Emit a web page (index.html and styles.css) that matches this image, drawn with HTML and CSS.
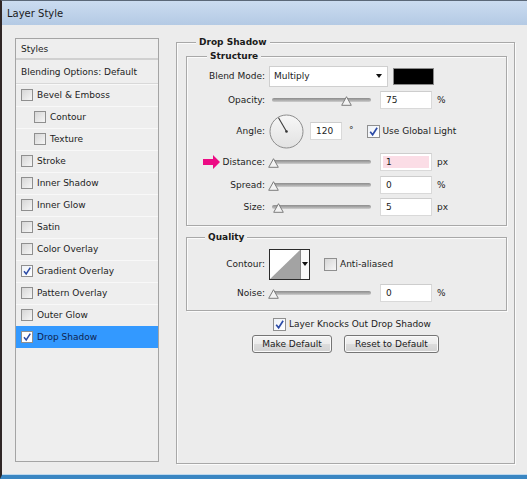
FILE: index.html
```html
<!DOCTYPE html>
<html>
<head>
<meta charset="utf-8">
<title>Layer Style</title>
<link rel="stylesheet" href="styles.css">
</head>
<body>
<div class="window">
  <div class="titlebar">Layer Style</div>
  <div class="content">
    <div class="sidebar">
      <div class="side-head">Styles</div>
      <div class="side-blend">Blending Options: Default</div>
      <div class="side-item"><span class="cb"></span><span>Bevel &amp; Emboss</span></div>
      <div class="side-item sub"><span class="cb"></span><span>Contour</span></div>
      <div class="side-item sub"><span class="cb"></span><span>Texture</span></div>
      <div class="side-item"><span class="cb"></span><span>Stroke</span></div>
      <div class="side-item"><span class="cb"></span><span>Inner Shadow</span></div>
      <div class="side-item"><span class="cb"></span><span>Inner Glow</span></div>
      <div class="side-item"><span class="cb"></span><span>Satin</span></div>
      <div class="side-item"><span class="cb"></span><span>Color Overlay</span></div>
      <div class="side-item"><span class="cb checked"><svg viewBox="0 0 10 10" width="10" height="10"><path d="M2 5.2 L4.2 8 L8.3 1.6" fill="none" stroke="#2b4aa6" stroke-width="1.5"/></svg></span><span>Gradient Overlay</span></div>
      <div class="side-item"><span class="cb"></span><span>Pattern Overlay</span></div>
      <div class="side-item"><span class="cb"></span><span>Outer Glow</span></div>
      <div class="side-item selected"><span class="cb checked"><svg viewBox="0 0 10 10" width="10" height="10"><path d="M2 5.2 L4.2 8 L8.3 1.6" fill="none" stroke="#2b4aa6" stroke-width="1.5"/></svg></span><span>Drop Shadow</span></div>
    </div>

    <div class="panel">
      <div class="group outer">
        <div class="group-title t-drop">Drop Shadow</div>

        <div class="group structure">
          <div class="group-title t-structure">Structure</div>
          <div class="rows">
            <div class="row h24">
              <div class="lbl">Blend Mode:</div>
              <div class="select"><span>Multiply</span><span class="caret"></span></div>
              <div class="swatch"></div>
            </div>
            <div class="row h24">
              <div class="lbl">Opacity:</div>
              <div class="slider"><div class="track"></div><svg class="thumb" style="left:69px" viewBox="0 0 11 10" width="11" height="10"><polygon points="5.5,0.7 10.3,9.3 0.7,9.3" fill="#f3f3f3" stroke="#7c7c7c" stroke-width="1"/></svg></div>
              <div class="input">75</div>
              <span class="unit">%</span>
            </div>
            <div class="row h38">
              <div class="lbl">Angle:</div>
              <svg class="dial" viewBox="0 0 35 35" width="35" height="35">
                <defs><linearGradient id="dg" x1="0" y1="0" x2="0" y2="1"><stop offset="0" stop-color="#f7f7f7"/><stop offset="1" stop-color="#e2e2e2"/></linearGradient></defs>
                <circle cx="17.5" cy="17.5" r="16.5" fill="url(#dg)" stroke="#8c8c8c" stroke-width="1"/>
                <line x1="17.5" y1="17.5" x2="9.5" y2="3.8" stroke="#3a3a3a" stroke-width="1.1"/>
                <circle cx="17.5" cy="17.5" r="1.3" fill="#333"/>
              </svg>
              <div class="input w32">120</div>
              <span class="deg">°</span>
              <span class="cb checked big"><svg viewBox="0 0 10 10" width="11" height="11"><path d="M2 5.2 L4.2 8 L8.3 1.6" fill="none" stroke="#2b4aa6" stroke-width="1.5"/></svg></span>
              <span class="cb-text">Use Global Light</span>
            </div>
            <div class="row h24">
              <div class="lbl"><svg class="arrow" viewBox="0 0 17 14" width="17" height="14"><polygon points="0,4 10,4 10,0 17,7 10,14 10,10 0,10" fill="#ec0b84"/></svg><span>Distance:</span></div>
              <div class="slider"><div class="track"></div><svg class="thumb" style="left:-4px" viewBox="0 0 11 10" width="11" height="10"><polygon points="5.5,0.7 10.3,9.3 0.7,9.3" fill="#f3f3f3" stroke="#7c7c7c" stroke-width="1"/></svg></div>
              <div class="input pink">1</div>
              <span class="unit">px</span>
            </div>
            <div class="row h22">
              <div class="lbl">Spread:</div>
              <div class="slider"><div class="track"></div><svg class="thumb" style="left:-4px" viewBox="0 0 11 10" width="11" height="10"><polygon points="5.5,0.7 10.3,9.3 0.7,9.3" fill="#f3f3f3" stroke="#7c7c7c" stroke-width="1"/></svg></div>
              <div class="input">0</div>
              <span class="unit">%</span>
            </div>
            <div class="row h22">
              <div class="lbl">Size:</div>
              <div class="slider"><div class="track"></div><svg class="thumb" style="left:1px" viewBox="0 0 11 10" width="11" height="10"><polygon points="5.5,0.7 10.3,9.3 0.7,9.3" fill="#f3f3f3" stroke="#7c7c7c" stroke-width="1"/></svg></div>
              <div class="input">5</div>
              <span class="unit">px</span>
            </div>
          </div>
        </div>

        <div class="group quality">
          <div class="group-title t-quality">Quality</div>
          <div class="rows">
            <div class="row h38">
              <div class="lbl">Contour:</div>
              <div class="contour">
                <svg viewBox="0 0 30 29" width="30" height="29"><rect width="30" height="29" fill="#ffffff"/><polygon points="0,29 30,0 30,29" fill="#a3a3a3"/></svg>
                <div class="contour-caret"><span class="caret"></span></div>
              </div>
              <span class="cb big aa"></span>
              <span class="cb-text">Anti-aliased</span>
            </div>
            <div class="row h20">
              <div class="lbl">Noise:</div>
              <div class="slider"><div class="track"></div><svg class="thumb" style="left:-4px" viewBox="0 0 11 10" width="11" height="10"><polygon points="5.5,0.7 10.3,9.3 0.7,9.3" fill="#f3f3f3" stroke="#7c7c7c" stroke-width="1"/></svg></div>
              <div class="input">0</div>
              <span class="unit">%</span>
            </div>
          </div>
        </div>

        <div class="knock">
          <span class="cb checked big"><svg viewBox="0 0 10 10" width="11" height="11"><path d="M2 5.2 L4.2 8 L8.3 1.6" fill="none" stroke="#2b4aa6" stroke-width="1.5"/></svg></span>
          <span class="cb-text">Layer Knocks Out Drop Shadow</span>
        </div>
        <div class="buttons">
          <div class="btn b-make">Make Default</div>
          <div class="btn b-reset">Reset to Default</div>
        </div>
      </div>
    </div>
  </div>
</div>
</body>
</html>
```

FILE: styles.css
```css
html, body {
  margin: 0;
  padding: 0;
}
body {
  width: 527px;
  height: 479px;
  overflow: hidden;
  background: #ececec;
  font-family: "DejaVu Sans", "Liberation Sans", sans-serif;
  font-size: 9px;
  color: #1c1c1c;
}
.window {
  box-sizing: border-box;
  height: 479px;
  display: flex;
  flex-direction: column;
  border-top: 1px solid #5b6878;
  border-left: 2px solid #2f2626;
  border-bottom: 4px solid #3a86c2;
  box-shadow: inset 0 -1px 0 #bcd8ee;
}
.titlebar {
  height: 24px;
  flex: none;
  display: flex;
  align-items: center;
  padding-left: 5px;
  font-size: 10px;
  color: #1a1a1a;
  background: linear-gradient(#cbdcf0, #bdd1e9 60%, #b4cae4);
}
.content {
  flex: 1;
  display: flex;
  align-items: flex-start;
  padding: 13px 0 0 13px;
}

/* sidebar */
.sidebar {
  box-sizing: border-box;
  width: 144px;
  height: 424px;
  flex: none;
  border: 1px solid #a4a4a4;
  background: #eeeeee;
  display: flex;
  flex-direction: column;
}
.side-head {
  box-sizing: border-box;
  height: 21px;
  display: flex;
  align-items: center;
  padding-left: 5px;
  border-bottom: 2px solid #d0d0d0;
}
.side-blend {
  box-sizing: border-box;
  height: 24px;
  display: flex;
  align-items: center;
  padding-left: 5px;
  border-bottom: 1px solid #d8d8d8;
}
.side-item {
  height: 22px;
  display: flex;
  align-items: center;
  padding-left: 5px;
  gap: 4px;
  box-shadow: inset 0 1px 0 #f8f8f8;
}
.side-item.sub {
  padding-left: 18px;
}
.side-item.selected {
  background: #3399ff;
  color: #0f234f;
  box-shadow: none;
}
.side-item.selected .cb {
  background: #ffffff;
}

/* checkbox */
.cb {
  box-sizing: border-box;
  width: 12px;
  height: 12px;
  flex: none;
  border: 1px solid #8f8f8f;
  background: linear-gradient(135deg, #d6d6d6, #f6f6f6);
  display: flex;
  align-items: center;
  justify-content: center;
}
.cb.checked {
  background: linear-gradient(135deg, #eef2f8, #ffffff);
}
.cb.big {
  width: 13px;
  height: 13px;
}

/* panel */
.panel {
  margin-left: 17px;
  margin-top: 4px;
  width: 339px;
  flex: none;
}
.group {
  box-sizing: border-box;
  border: 1px solid #a8a8a8;
  box-shadow: 1px 1px 0 #fbfbfb, inset 1px 1px 0 #fbfbfb;
  display: flex;
  flex-direction: column;
}
.group-title {
  align-self: flex-start;
  margin-top: -7px;
  height: 12px;
  line-height: 12px;
  padding: 0 3px;
  background: #ececec;
  font-weight: bold;
  color: #1a1a1a;
}
.outer {
  height: 422px;
}
.t-drop {
  margin-left: 19px;
}
.structure {
  margin: 8px 7px 0 9px;
  padding-bottom: 7px;
}
.t-structure {
  margin-left: 20px;
}
.quality {
  margin: 11px 7px 0 9px;
  padding-bottom: 7px;
}
.t-quality {
  margin-left: 18px;
}
.rows {
  margin-top: 2px;
  display: flex;
  flex-direction: column;
}
.row {
  display: flex;
  align-items: center;
}
.h24 { height: 24px; }
.h22 { height: 22px; }
.h20 { height: 20px; }
.h38 { height: 38px; }
.lbl {
  width: 78px;
  flex: none;
  margin-right: 4px;
  display: flex;
  justify-content: flex-end;
  align-items: center;
  gap: 3px;
  text-align: right;
}
.arrow {
  display: block;
}

/* blend select */
.select {
  box-sizing: border-box;
  width: 119px;
  height: 21px;
  background: #ffffff;
  border: 1px solid #cfcfcf;
  display: flex;
  align-items: center;
  justify-content: space-between;
  padding: 0 5px 0 4px;
}
.caret {
  width: 0;
  height: 0;
  border-left: 3.5px solid transparent;
  border-right: 3.5px solid transparent;
  border-top: 4px solid #111;
}
.swatch {
  box-sizing: border-box;
  width: 41px;
  height: 17px;
  margin-left: 5px;
  background: #000;
  border: 1px solid #8a8a8a;
}

/* sliders */
.slider {
  position: relative;
  width: 99px;
  height: 14px;
  margin-left: 3px;
  flex: none;
}
.track {
  margin-top: 5px;
  height: 4px;
  border-radius: 2px;
  background: linear-gradient(#8d8d8d, #a8a8a8 50%, #cfcfcf);
}
.thumb {
  position: absolute;
  top: 3px;
  display: block;
}

/* inputs */
.input {
  box-sizing: border-box;
  width: 52px;
  height: 18px;
  margin-left: 9px;
  background: #ffffff;
  border: 1px solid #d9d9d9;
  border-top-color: #cdcdcd;
  padding-left: 5px;
  display: flex;
  align-items: center;
  flex: none;
}
.input.w32 {
  width: 32px;
  margin-left: 6px;
}
.input.pink {
  background: #fbdde6;
  box-shadow: inset 0 0 0 2px #ffffff;
}
.unit {
  margin-left: 5px;
}
.deg {
  margin-left: 7px;
  margin-top: -3px;
}
.big.checked, .row .cb {
  margin-left: 13px;
}
.cb-text {
  margin-left: 3px;
}

/* dial */
.dial {
  display: block;
  flex: none;
}

/* contour */
.contour {
  box-sizing: border-box;
  height: 31px;
  display: flex;
  border: 1px solid #2b2b2b;
  background: #ffffff;
  flex: none;
}
.contour svg {
  display: block;
}
.contour-caret {
  width: 8px;
  border-left: 1px solid #8a8a8a;
  display: flex;
  align-items: center;
  justify-content: center;
  background: #fafafa;
}
.cb.aa {
  margin-left: 14px;
}

/* bottom */
.knock {
  margin: 3px 0 0 96px;
  height: 20px;
  display: flex;
  align-items: center;
}
.knock .cb {
  margin-left: 0;
}
.buttons {
  margin: 1px 0 0 75px;
  display: flex;
  gap: 12px;
}
.btn {
  box-sizing: border-box;
  height: 18px;
  border: 1px solid #757575;
  border-radius: 3px;
  background: linear-gradient(#f4f4f4, #ebebeb 50%, #dcdcdc 51%, #d2d2d2);
  box-shadow: inset 0 0 0 1px #fafafa;
  display: flex;
  align-items: center;
  justify-content: center;
  color: #1a1a1a;
}
.b-make {
  width: 80px;
}
.b-reset {
  width: 95px;
}
```
